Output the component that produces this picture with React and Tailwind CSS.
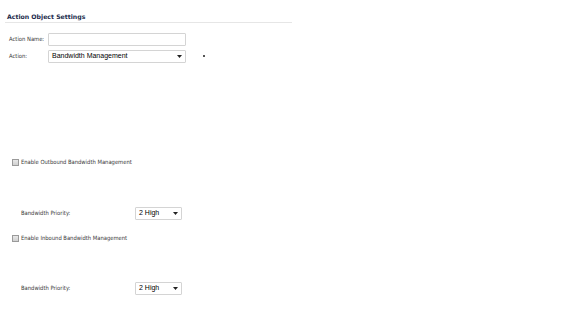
export default function App() {
  const label = "font-['DejaVu_Sans_Condensed','DejaVu_Sans',sans-serif] text-[5.8px] text-[#3a3a3a] whitespace-nowrap"
  const sel = "flex items-center justify-between border border-[#d4d4d4] bg-white rounded-[1px] h-[13px] font-['Liberation_Sans',sans-serif] text-[7px] text-black pl-[3px] pr-[3px] whitespace-nowrap"
  const Arrow = () => (
    <svg width="5" height="3" viewBox="0 0 5 3"><path d="M0 0h5L2.5 3z" fill="#222" /></svg>
  )
  const Check = () => (
    <span className="w-[7px] h-[7px] border border-[#9a9a9a] bg-gradient-to-b from-[#e8e8e8] to-[#d0d0d0] inline-block" />
  )
  return (
    <div className="w-[576px] h-[312px] bg-white relative overflow-hidden">
      <div className="pl-[5px] pt-[12px] w-[292px]">
        <div className="border-b border-[#e6e6e6] pl-[2px] pb-[2px] h-[11px]">
          <span className="font-['DejaVu_Sans',sans-serif] font-bold text-[6.2px] text-[#1b2a4b] leading-[9px] block whitespace-nowrap">Action Object Settings</span>
        </div>
      </div>
      <div className="pl-[9px] mt-[10px] flex items-center h-[13px]">
        <span className={`${label} w-[39px]`}>Action Name:</span>
        <div className="w-[138px] h-[13px] border border-[#d4d4d4] rounded-[1px]" />
      </div>
      <div className="pl-[9px] mt-[4px] flex items-center h-[13px]">
        <span className={`${label} w-[39px]`}>Action:</span>
        <div className={`${sel} w-[138px]`}>
          <span>Bandwidth Management</span>
          <Arrow />
        </div>
        <span className="ml-[17px] mt-[-1px] w-[2px] h-[2px] bg-[#555]" />
      </div>
      <div className="pl-[12px] mt-[95px] flex items-center h-[8px] gap-[2px]">
        <Check />
        <span className={label}>Enable Outbound Bandwidth Management</span>
      </div>
      <div className="pl-[21px] mt-[41px] flex items-center h-[13px]">
        <span className={`${label} w-[114px]`}>Bandwidth Priority:</span>
        <div className={`${sel} w-[47px]`}>
          <span>2 High</span>
          <Arrow />
        </div>
      </div>
      <div className="pl-[12px] mt-[14px] flex items-center h-[8px] gap-[2px]">
        <Check />
        <span className={label}>Enable Inbound Bandwidth Management</span>
      </div>
      <div className="pl-[21px] mt-[40px] flex items-center h-[13px]">
        <span className={`${label} w-[114px]`}>Bandwidth Priority:</span>
        <div className={`${sel} w-[47px]`}>
          <span>2 High</span>
          <Arrow />
        </div>
      </div>
    </div>
  )
}
